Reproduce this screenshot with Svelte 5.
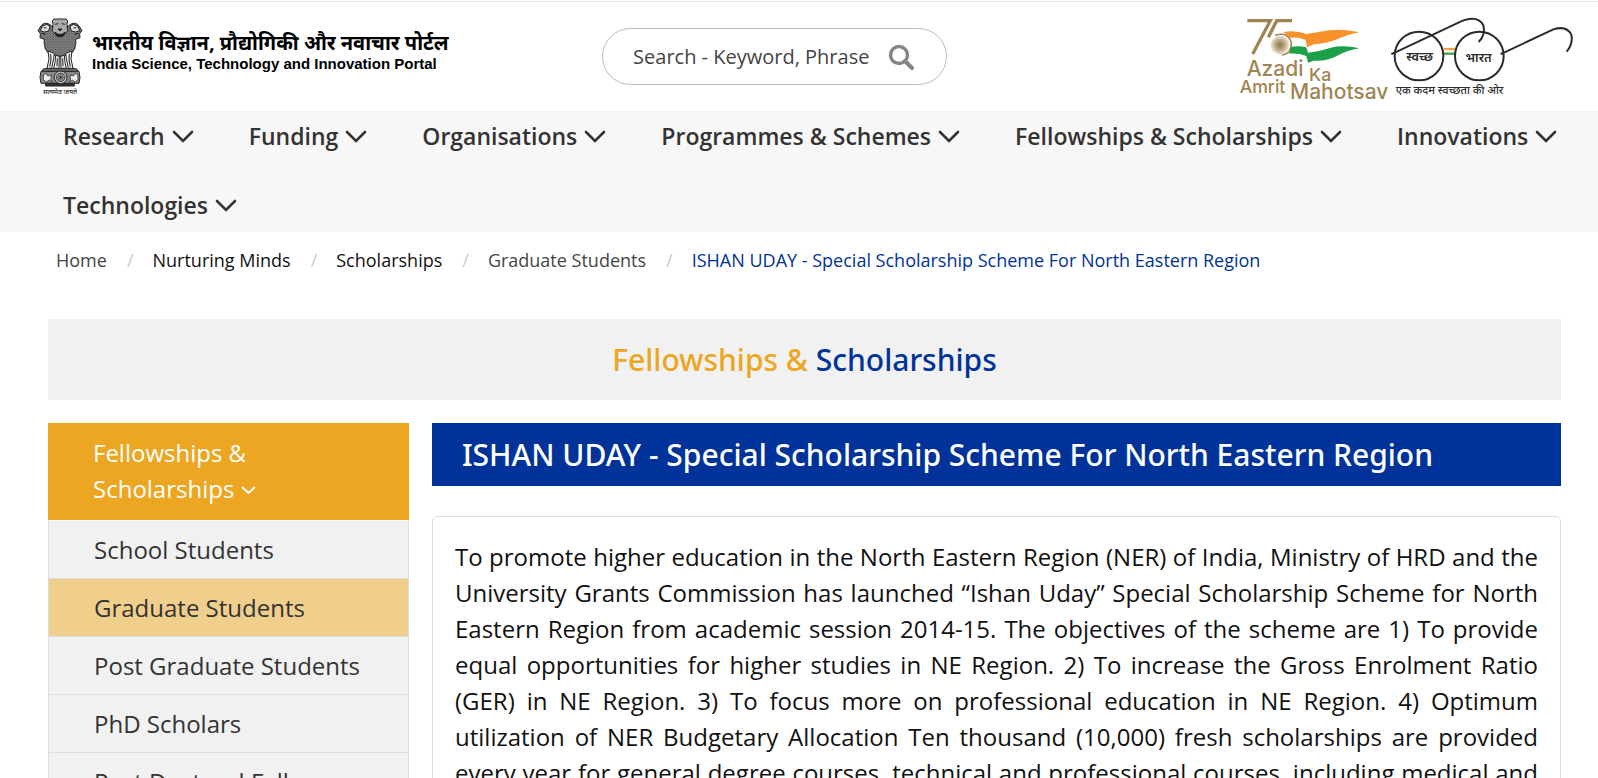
<script lang="ts">
	const menu = [
		'Research',
		'Funding',
		'Organisations',
		'Programmes & Schemes',
		'Fellowships & Scholarships',
		'Innovations',
		'Technologies'
	];

	const crumbs = [
		{ label: 'Home', tone: 'soft' },
		{ label: 'Nurturing Minds', tone: 'dark' },
		{ label: 'Scholarships', tone: 'dark' },
		{ label: 'Graduate Students', tone: 'soft' },
		{
			label: 'ISHAN UDAY - Special Scholarship Scheme For North Eastern Region',
			tone: 'current'
		}
	];

	const audiences = [
		'School Students',
		'Graduate Students',
		'Post Graduate Students',
		'PhD Scholars',
		'Post Doctoral Fellows'
	];

	let active = $state('Graduate Students');
	let open = $state(true);
	let query = $state('');
</script>

<svelte:head>
	<title>ISHAN UDAY | India Science, Technology and Innovation Portal</title>
</svelte:head>

<header>
	<a class="brand" href="#home">
		<svg class="emblem" viewBox="0 0 138 234" aria-hidden="true">
			<defs>
				<pattern id="mane" width="8" height="8" patternUnits="userSpaceOnUse">
					<rect width="8" height="8" fill="#444" />
					<path d="M0 2q2 4 4 0t4 0M0 6q2 4 4 0t4 0" fill="none" stroke="#ddd" stroke-width="1.6" />
				</pattern>
			</defs>
			<g stroke="#222" stroke-width="3" stroke-linejoin="round">
				<path
					d="M44 24C32 12 18 14 12 24L3 38l7 9-1 12 13 5c-2 16 2 34 14 43l33 8 33-8c12-9 16-27 14-43l13-5-1-12 7-9-9-14c-6-10-20-12-32 0z"
					fill="url(#mane)"
				/>
				<path d="M46 8Q50 1 58 3h22q8-2 12 5l-2 12 2 18-10 12-13 6-13-6-10-12 2-18z" fill="#aaa" />
				<path d="M16 24l14-5 9 7-4 13-13 3-12-4zM122 24l-14-5-9 7 4 13 13 3 12-4z" fill="#ddd" />
				<path d="M54 19l10-2M74 17l10 2M63 33h12l-6 6zM54 43q15 13 30 0l-4 10q-11 7-22 0z" fill="#222" />
				<path d="M20 29l8 1M118 29l-8 1M14 46l11 3M124 46l-11 3" />
				<path
					d="M33 99l3 24-6 28h14l6-30 2-15zM56 112l-2 22-4 17h16l1-36zM82 112l2 22 4 17H72l-1-36zM105 99l-3 24 6 28H94l-6-30-2-15z"
					fill="#eee"
				/>
				<path d="M41 108l1 18-4 20M61 121l-1 24M77 121l1 24M97 108l-1 18 4 20" fill="none" />
				<path d="M20 152h98l6 8H14z" fill="#777" />
				<path d="M12 160h114q6 20 0 36H12q-6-18 0-36z" fill="#888" />
				<path d="M26 196h86v8H26z" fill="#333" />
				<circle cx="71" cy="178" r="19" fill="#ccc" />
				<circle cx="71" cy="178" r="13" fill="#999" stroke-width="2" />
				<path d="M71 165v26M58 178h26M62 169l18 18M80 169l-18 18" stroke-width="1.6" />
				<path
					d="M20 170l8-4 4 8 11-3-2 12 4 8-9-5-9 6-8-8zM122 170l-8-4-4 8-11-3 2 12-4 8 9-5 9 6 8-8z"
					fill="#eee"
					stroke-width="2"
				/>
			</g>
			<text x="69" y="229" class="motto">सत्यमेव जयते</text>
		</svg>
		<span class="names">
			<span class="hindi">भारतीय विज्ञान, प्रौद्योगिकी और नवाचार पोर्टल</span>
			<span class="english">India Science, Technology and Innovation Portal</span>
		</span>
	</a>

	<form class="search" role="search" onsubmit={(e) => e.preventDefault()}>
		<input
			type="text"
			aria-label="Search"
			placeholder="Search - Keyword, Phrase"
			bind:value={query}
		/>
		<button aria-label="Submit search">
			<svg viewBox="0 0 26 26" aria-hidden="true">
				<circle cx="11" cy="11" r="8.5" fill="none" stroke="#858585" stroke-width="3.4" />
				<path d="M17 17l7 7" stroke="#858585" stroke-width="4" stroke-linecap="round" />
			</svg>
		</button>
	</form>

	<div class="partners">
		<svg class="azadi" viewBox="54 51 456 255" role="img" aria-label="Azadi Ka Amrit Mahotsav">
			<defs>
				<radialGradient id="chakra">
					<stop offset="0" stop-color="#8f7644" />
					<stop offset="0.5" stop-color="#bba984" />
					<stop offset="1" stop-color="#f3eee3" />
				</radialGradient>
			</defs>
			<g fill="none" stroke="#a08552" stroke-width="10">
				<path d="M82 62h69L98 162" />
				<path d="M216 62h-46l-25 50" />
				<path d="M166 106q38-12 48 22 2 33-28 37" stroke-width="5" />
			</g>
			<circle cx="180" cy="135" r="29" fill="url(#chakra)" />
			<path d="M190 96q38-6 69 6 32-5 69-11 42-6 90 6-36 7-66 20-35 15-70 16l-21 9-4-22q-25-10-47-6z" fill="#f7922b" />
			<path d="M212 141q24-5 47 1l5 16q34-3 68-15 42-9 86 2-36 6-66 22-34 18-70 15l-18 6-5-20q-24-9-51-7z" fill="#1ea04a" />
			<g class="azadi-words">
				<text x="80" y="228" class="large">Azadi</text>
				<text x="267" y="242" class="small">Ka</text>
				<text x="59" y="279" class="small">Amrit</text>
				<text x="210" y="297" class="large">Mahotsav</text>
			</g>
		</svg>
		<svg class="swachh" viewBox="510 51 555 255" role="img" aria-label="स्वच्छ भारत">
			<path d="M671 147h36" stroke="#f5a040" stroke-width="7" />
			<path d="M671 161h36" stroke="#3ea04c" stroke-width="7" />
			<g fill="none" stroke="#2b2b2b" stroke-width="6">
				<circle cx="597" cy="168" r="73" />
				<circle cx="778" cy="168" r="73" />
				<path d="M514 162l12-5L728 62q46-16 62 14 8 28-14 50" />
				<path d="M842 162l10-4L1000 88q40-12 54 16 6 26-14 51" />
			</g>
			<g class="swachh-words">
				<text x="599" y="184" class="lens">स्वच्छ</text>
				<text x="776" y="186" class="lens">भारत</text>
				<text x="689" y="283" class="line">एक कदम स्वच्छता की ओर</text>
			</g>
		</svg>
	</div>
</header>

<nav class="main-menu" aria-label="Main">
	<ul>
		{#each menu as item}
			<li>
				<a href="#menu">
					{item}
					<svg viewBox="0 0 22 14" aria-hidden="true"><path d="M2 3l9 9 9-9" /></svg>
				</a>
			</li>
		{/each}
	</ul>
</nav>

<nav class="breadcrumb" aria-label="Breadcrumb">
	<ol>
		{#each crumbs as crumb}
			<li><a class={crumb.tone} href="#crumb">{crumb.label}</a></li>
		{/each}
	</ol>
</nav>

<div class="page">
	<h1><span>Fellowships &amp;</span> Scholarships</h1>

	<div class="columns">
		<aside>
			<button class="toggle" aria-expanded={open} onclick={() => (open = !open)}>
				Fellowships &amp; Scholarships
				<svg viewBox="0 0 15 9" aria-hidden="true"><path d="M1 1l6.500 6L14 1" /></svg>
			</button>
			{#if open}
				<ul>
					{#each audiences as audience}
						<li>
							<a
								href="#audience"
								class:active={active === audience}
								onclick={() => (active = audience)}>{audience}</a
							>
						</li>
					{/each}
				</ul>
			{/if}
		</aside>

		<main>
			<h2>ISHAN UDAY - Special Scholarship Scheme For North Eastern Region</h2>
			<article>
				<p>
					To promote higher education in the North Eastern Region (NER) of India, Ministry of HRD
					and the University Grants Commission has launched “Ishan Uday” Special Scholarship
					Scheme for North Eastern Region from academic session 2014-15. The objectives of the
					scheme are 1) To provide equal opportunities for higher studies in NE Region. 2) To
					increase the Gross Enrolment Ratio (GER) in NE Region. 3) To focus more on professional
					education in NE Region. 4) Optimum utilization of NER Budgetary Allocation Ten thousand
					(10,000) fresh scholarships are provided every year for general degree courses,
					technical and professional courses, including medical and paramedical courses.
				</p>
			</article>
		</main>
	</div>
</div>

<style>
	:global(body) {
		background: white;
		color: #111;
		font-family: 'Open Sans', 'Noto Sans', sans-serif;
		font-size: 24px;
	}

	ul,
	ol {
		list-style: none;
		margin: 0;
		padding: 0;
	}

	a {
		color: inherit;
		text-decoration: none;
	}

	header {
		display: grid;
		grid-template-columns: 9fr 345px 10fr;
		align-items: center;
		box-sizing: border-box;
		height: 110px;
		margin-top: 1px;
		padding: 0 23px 0 37px;
		border-top: 1px solid #e7e7e7;
	}

	.brand {
		display: flex;
		align-items: center;
		gap: 9px;
		color: black;
	}

	.emblem {
		width: 46px;
		height: 78px;
	}

	.motto {
		font-size: 21px;
		text-anchor: middle;
	}

	.names {
		display: flex;
		flex-direction: column;
		padding-bottom: 10px;
		white-space: nowrap;
	}

	.hindi {
		font-size: 20px;
		font-weight: bold;
		line-height: 24px;
	}

	.english {
		font-family: 'Liberation Sans', Arial, sans-serif;
		font-size: 15px;
		font-weight: bold;
		line-height: 18px;
	}

	.search {
		display: flex;
		align-items: center;
		box-sizing: border-box;
		height: 57px;
		padding: 0 32px 0 30px;
		border: 1px solid #bbb;
		border-radius: 29px;
	}

	.search input {
		flex: 1;
		min-width: 0;
		padding: 0;
		border: 0;
		outline: 0;
		background: none;
		color: #444;
		font: inherit;
		font-size: 20px;
	}

	.search input::placeholder {
		color: #444;
		opacity: 1;
	}

	.search button {
		display: flex;
		padding: 0;
		border: 0;
		background: none;
		cursor: pointer;
	}

	.search button svg {
		width: 26px;
		height: 26px;
	}

	.partners {
		display: flex;
		justify-content: flex-end;
		padding-top: 6px;
	}

	.partners svg {
		height: 85px;
		overflow: visible;
	}

	.azadi {
		width: 152px;
	}

	.swachh {
		width: 185px;
	}

	.azadi-words {
		fill: #a08552;
		font-family: Inter, sans-serif;
		font-weight: 500;
	}

	.azadi-words .large {
		font-size: 63px;
	}

	.azadi-words .small {
		font-size: 53px;
	}

	.swachh-words {
		fill: #2b2b2b;
		font-weight: 600;
		text-anchor: middle;
	}

	.lens {
		font-size: 38px;
	}

	.line {
		font-size: 33px;
		font-weight: 500;
	}

	.main-menu {
		padding: 0 30px 2px 63px;
		background: #f7f7f7;
	}

	.main-menu ul {
		display: flex;
		flex-wrap: wrap;
		gap: 19px 55px;
	}

	.main-menu a {
		display: flex;
		align-items: center;
		gap: 7px;
		color: #333;
		font-size: 23px;
		font-weight: 600;
		line-height: 50px;
	}

	.main-menu svg {
		width: 22px;
		height: 14px;
		fill: none;
		stroke: #333;
		stroke-linecap: round;
		stroke-width: 2.6;
	}

	.breadcrumb ol {
		display: flex;
		flex-wrap: wrap;
		padding: 13px 56px 15px;
		font-size: 18px;
		line-height: 30px;
	}

	.breadcrumb li + li::before {
		content: '/';
		padding: 0 19px 0 20px;
		color: #ccc;
	}

	.soft {
		color: #444;
	}

	.dark {
		color: #111;
	}

	.current {
		color: #039;
	}

	.page {
		padding: 29px 37px 0 48px;
	}

	h1 {
		margin: 0 0 23px;
		background: #f1f1f1;
		color: #039;
		font-family: 'Noto Sans', sans-serif;
		font-size: 30px;
		font-weight: 500;
		line-height: 81px;
		text-align: center;
	}

	h1 span {
		color: #eca621;
	}

	.columns {
		display: grid;
		grid-template-columns: 361px 1fr;
		gap: 23px;
		align-items: start;
	}

	.toggle {
		width: 100%;
		padding: 12px 96px 13px 45px;
		border: 0;
		background: #eca621;
		color: white;
		font: inherit;
		line-height: 36px;
		text-align: left;
		cursor: pointer;
	}

	.toggle svg {
		width: 15px;
		height: 9px;
		fill: none;
		stroke: white;
		stroke-width: 2;
		vertical-align: 3px;
	}

	aside ul {
		border: 1px solid #ddd;
		border-top-color: white;
	}

	aside li + li {
		border-top: 1px solid #ddd;
	}

	aside li a {
		display: block;
		padding-left: 45px;
		background: #f1f1f1;
		color: #333;
		line-height: 57px;
	}

	aside li a.active {
		background: #f0ce8c;
	}

	h2 {
		margin: 0 0 30px;
		padding-left: 30px;
		background: #039;
		color: white;
		font-family: 'Noto Sans', sans-serif;
		font-size: 30px;
		font-weight: 500;
		line-height: 63px;
	}

	article {
		padding: 22px;
		border: 1px solid #ddd;
		border-radius: 5px;
	}

	p {
		margin: 0;
		line-height: 36px;
		text-align: justify;
	}
</style>
